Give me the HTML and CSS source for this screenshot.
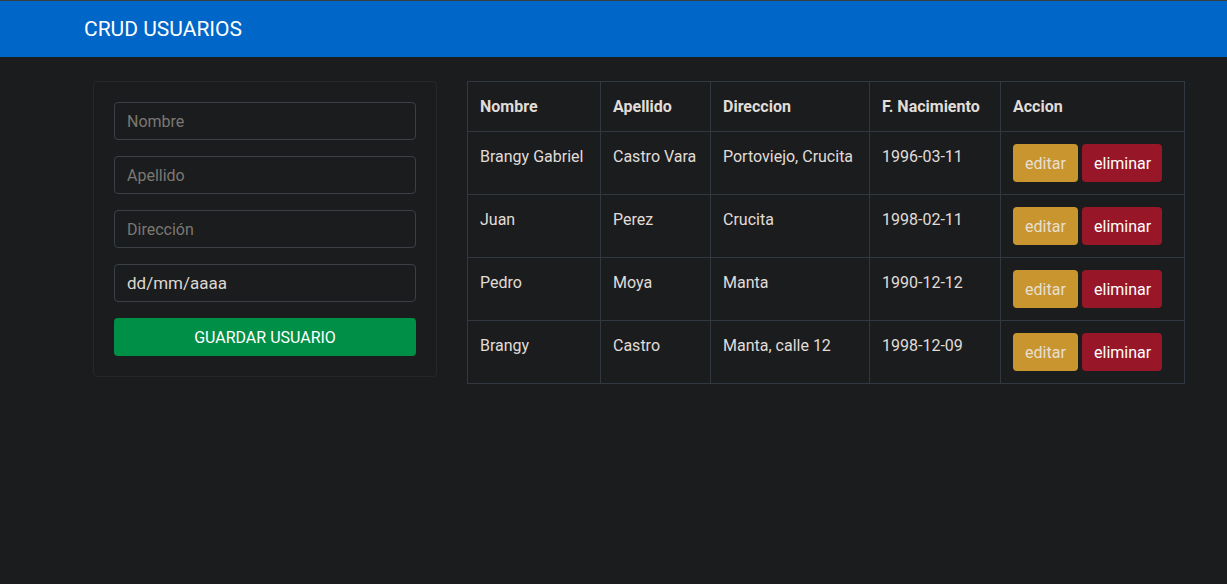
FILE: index.html
```html
<!DOCTYPE html>
<html lang="es">
<head>
<meta charset="utf-8">
<title>CRUD Usuarios</title>
<link rel="stylesheet" href="styles.css">
</head>
<body>
<nav class="navbar">
  <span class="brand">CRUD USUARIOS</span>
</nav>
<main class="main">
  <section class="card">
    <form class="form">
      <input class="field" type="text" placeholder="Nombre">
      <input class="field" type="text" placeholder="Apellido">
      <input class="field" type="text" placeholder="Dirección">
      <div class="field date">dd/mm/aaaa</div>
      <button class="btn-save" type="button">GUARDAR USUARIO</button>
    </form>
  </section>
  <table class="table">
    <thead>
      <tr><th class="c1">Nombre</th><th class="c2">Apellido</th><th class="c3">Direccion</th><th class="c4">F. Nacimiento</th><th>Accion</th></tr>
    </thead>
    <tbody>
      <tr><td>Brangy Gabriel</td><td>Castro Vara</td><td>Portoviejo, Crucita</td><td>1996-03-11</td><td><div class="actions"><button class="btn edit">editar</button><button class="btn del">eliminar</button></div></td></tr>
      <tr><td>Juan</td><td>Perez</td><td>Crucita</td><td>1998-02-11</td><td><div class="actions"><button class="btn edit">editar</button><button class="btn del">eliminar</button></div></td></tr>
      <tr><td>Pedro</td><td>Moya</td><td>Manta</td><td>1990-12-12</td><td><div class="actions"><button class="btn edit">editar</button><button class="btn del">eliminar</button></div></td></tr>
      <tr><td>Brangy</td><td>Castro</td><td>Manta, calle 12</td><td>1998-12-09</td><td><div class="actions"><button class="btn edit">editar</button><button class="btn del">eliminar</button></div></td></tr>
    </tbody>
  </table>
</main>
</body>
</html>
```
FILE: styles.css
```css
* { box-sizing: border-box; }
html, body { margin: 0; }
body {
  background: #1b1c1e;
  color: #e0ddd8;
  font-family: Roboto, "Liberation Sans", Arial, sans-serif;
  font-size: 16px;
  line-height: 24px;
  height: 584px;
}
.navbar {
  height: 57px;
  background: #0066c8;
  border-top: 1px solid #3a3d40;
  display: flex;
  align-items: center;
  padding-left: 84px;
}
.brand {
  color: #ffffff;
  font-size: 21px;
  line-height: 30px;
}
.main {
  display: flex;
  align-items: flex-start;
  gap: 30px;
  padding: 24px 0 0 93px;
}
.card {
  width: 344px;
  border: 1px solid #25282b;
  border-radius: 4px;
  padding: 20px;
}
.form {
  display: flex;
  flex-direction: column;
  gap: 16px;
}
.field {
  display: block;
  width: 100%;
  height: 38px;
  background: #1b1c1e;
  border: 1px solid #3b4046;
  border-radius: 4px;
  padding: 6px 12px;
  font-family: inherit;
  font-size: 16px;
  line-height: 24px;
  color: #e0ddd8;
  outline: none;
}
.field::placeholder { color: #7b7872; }
.date { color: #dcd8d1; font-size: 17px; }
.btn-save {
  height: 38px;
  border: none;
  border-radius: 4px;
  background: #008f47;
  color: #ffffff;
  font-family: inherit;
  font-size: 16px;
}
.table {
  width: 718px;
  border-collapse: collapse;
  border: 1px solid #313840;
}
.table th, .table td {
  border: 1px solid #313840;
  padding: 13px 12px 11px;
  text-align: left;
  vertical-align: top;
  font-size: 16px;
  line-height: 24px;
}
.table th { font-weight: bold; height: 50px; }
.table td { height: 63px; }
.table td:last-child { padding-top: 12px; padding-bottom: 12px; }
.c1 { width: 133px; }
.c2 { width: 110px; }
.c3 { width: 159px; }
.c4 { width: 131px; }
.actions { display: flex; gap: 4px; }
.btn {
  height: 38px;
  border: none;
  border-radius: 4px;
  padding: 7px 12px 5px;
  font-family: inherit;
  font-size: 16px;
  line-height: 24px;
}
.edit { background: #c9952f; color: #e8dfcf; width: 65px; }
.del { background: #971728; color: #ffffff; width: 80px; }
```
